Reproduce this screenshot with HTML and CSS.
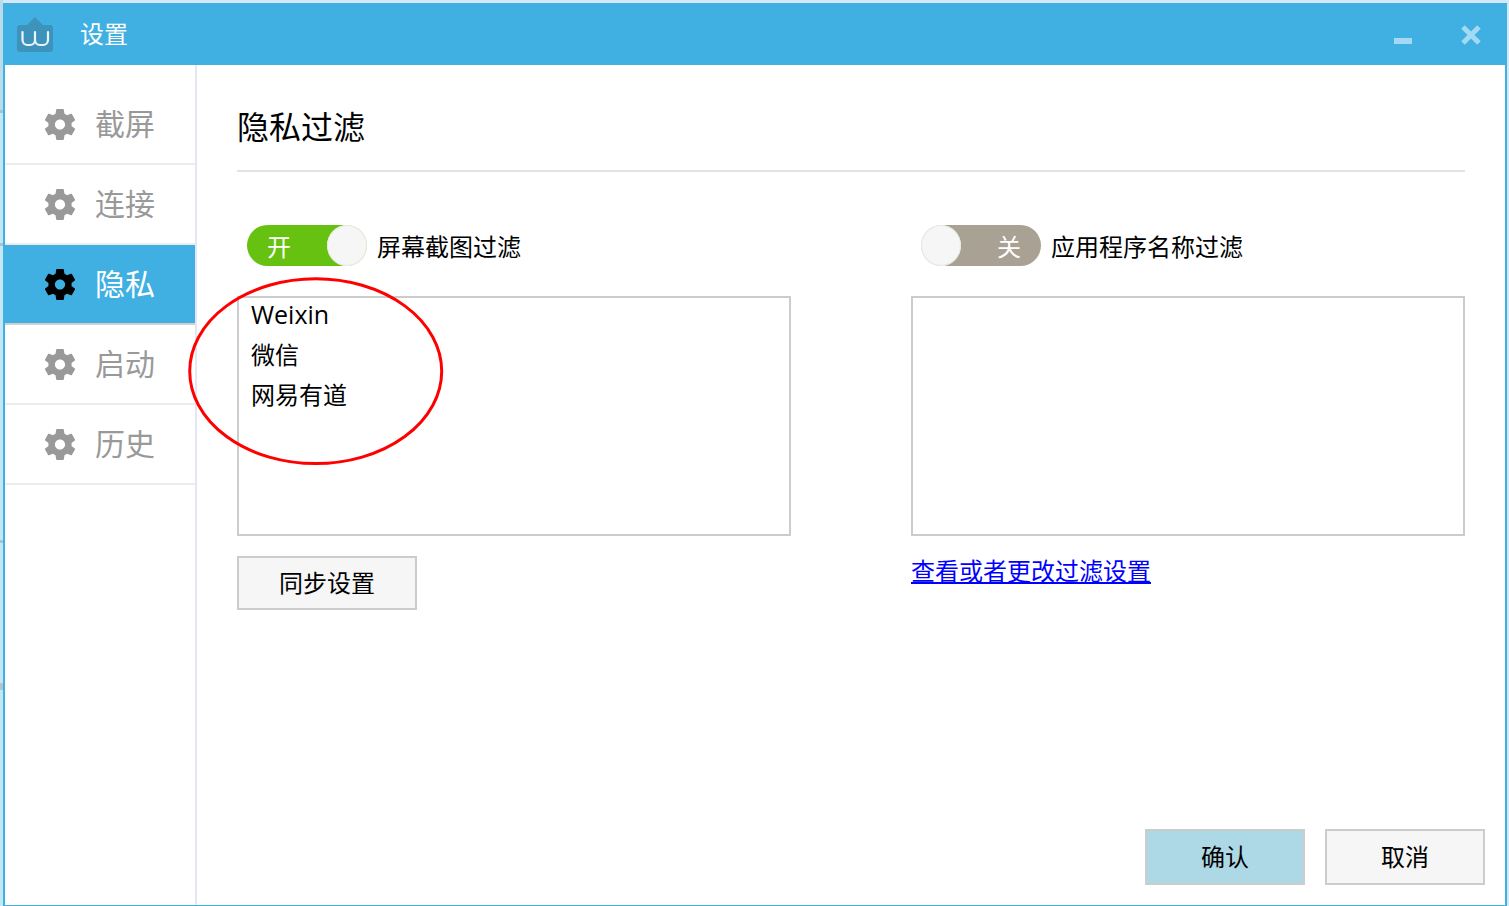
FILE: index.html
```html
<!DOCTYPE html>
<html lang="zh-CN">
<head>
<meta charset="utf-8">
<title>设置</title>
<link rel="stylesheet" href="styles.css">
</head>
<body>
<svg width="0" height="0" class="defs" aria-hidden="true"><defs>
<symbol id="gear" viewBox="2.4 2 19.2 20"><path fill-rule="evenodd" d="M19.43 12.98c.04-.32.07-.64.07-.98s-.03-.66-.07-.98l2.11-1.65c.19-.15.24-.42.12-.64l-2-3.46c-.12-.22-.39-.3-.61-.22l-2.49 1c-.52-.4-1.08-.73-1.69-.98l-.38-2.65C14.46 2.18 14.25 2 14 2h-4c-.25 0-.46.18-.49.42l-.38 2.65c-.61.25-1.17.59-1.69.98l-2.49-1c-.23-.09-.49 0-.61.22l-2 3.46c-.13.22-.07.49.12.64l2.11 1.65c-.04.32-.07.65-.07.98s.03.66.07.98l-2.11 1.65c-.19.15-.24.42-.12.64l2 3.46c.12.22.39.3.61.22l2.49-1c.52.4 1.08.73 1.69.98l.38 2.65c.03.24.24.42.49.42h4c.25 0 .46-.18.49-.42l.38-2.65c.61-.25 1.17-.59 1.69-.98l2.49 1c.23.09.49 0 .61-.22l2-3.46c.12-.22.07-.49-.12-.64l-2.11-1.65zM12 15.3c-1.82 0-3.3-1.48-3.3-3.3s1.48-3.3 3.3-3.3 3.3 1.48 3.3 3.3-1.48 3.3-3.3 3.3z"/></symbol>
</defs></svg>
<div class="window">
  <header class="titlebar">
    <svg class="logo" viewBox="0 0 36 35" width="36" height="35" aria-hidden="true">
      <path class="logo-bg" d="M18 0 L26 8 H33 a3 3 0 0 1 3 3 V32 a3 3 0 0 1-3 3 H3 a3 3 0 0 1-3-3 V11 a3 3 0 0 1 3-3 H10 Z"/>
      <path class="logo-w" d="M5.5 15 V23 a5 5 0 0 0 5 5 H13 a5 5 0 0 0 5-5 V15 M18 23 a5 5 0 0 0 5 5 H26 a5 5 0 0 0 5-5 V15"/>
    </svg>
    <span class="title">设置</span>
    <span class="minimize"></span>
    <svg class="close" viewBox="0 0 20 20" width="20" height="20" aria-hidden="true"><path d="M2 2 L18 18 M18 2 L2 18"/></svg>
  </header>
  <div class="body">
    <nav class="sidebar">
      <div class="nav-item"><svg class="gear"><use href="#gear"/></svg><span>截屏</span></div>
      <div class="nav-item"><svg class="gear"><use href="#gear"/></svg><span>连接</span></div>
      <div class="nav-item active"><svg class="gear"><use href="#gear"/></svg><span>隐私</span></div>
      <div class="nav-item"><svg class="gear"><use href="#gear"/></svg><span>启动</span></div>
      <div class="nav-item"><svg class="gear"><use href="#gear"/></svg><span>历史</span></div>
    </nav>
    <main class="main">
      <h1 class="heading">隐私过滤</h1>
      <div class="columns">
        <section class="col">
          <div class="switch-row">
            <div class="switch on"><span class="switch-text">开</span><span class="knob"></span></div>
            <span class="switch-label">屏幕截图过滤</span>
          </div>
          <div class="listbox">
            <div class="list-line latin">Weixin</div>
            <div class="list-line">微信</div>
            <div class="list-line">网易有道</div>
          </div>
          <button class="btn sync" type="button"><span class="btn-text">同步设置</span></button>
        </section>
        <section class="col">
          <div class="switch-row">
            <div class="switch off"><span class="knob"></span><span class="switch-text">关</span></div>
            <span class="switch-label">应用程序名称过滤</span>
          </div>
          <div class="listbox"></div>
          <a class="link" href="#">查看或者更改过滤设置</a>
        </section>
      </div>
      <footer class="footer">
        <button class="btn action primary" type="button"><span class="btn-text">确认</span></button>
        <button class="btn action" type="button"><span class="btn-text">取消</span></button>
      </footer>
    </main>
  </div>
  <svg class="annotation" viewBox="0 0 260 190" width="260" height="190" aria-hidden="true"><ellipse cx="128.7" cy="94.2" rx="126" ry="92.4"/></svg>
</div>
</body>
</html>
```
FILE: styles.css
```css
* { box-sizing: border-box; }
html, body { margin: 0; height: 906px; overflow: hidden; }
body {
  padding: 3px 2px 0 3px;
  background:
    linear-gradient(#b9dbea 0 110px, #a9c4d0 110px 113px, #c4e7f6 113px 243px, #a9c4d0 243px 246px, #c4e7f6 246px 540px, #a9c4d0 540px 543px, #c4e7f6 543px 683px, #b5c4ca 683px 690px, #c4e7f6 690px) left top / 3px 100% no-repeat,
    #d3eaf6;
  font-family: "Noto Sans CJK SC", "Noto Sans", sans-serif;
  color: #000;
}
.defs { position: absolute; }
.window {
  position: relative;
  height: 903px;
  display: flex;
  flex-direction: column;
  background: #fff;
  border: solid #3fb0e2;
  border-width: 0 2px 1px;
}
.titlebar {
  height: 62px;
  margin: 0 -2px;
  flex: none;
  display: flex;
  align-items: center;
  padding: 0 26px 0 14px;
  background: #40b0e2;
}
.logo { margin-top: 1px; flex: none; }
.logo-bg { fill: #3e93bd; }
.logo-w { fill: none; stroke: #eaf6fb; stroke-width: 2.2; stroke-linecap: round; }
.title { margin-left: 27px; padding-bottom: 2px; color: #fff; font-size: 24px; line-height: 32px; flex: 1; }
.minimize { width: 18px; height: 6px; margin: 13px 49px 0 0; background: #a3d9f2; }
.close { margin-top: 1px; }
.close path { fill: none; stroke: #a3d9f2; stroke-width: 5; }
.body { flex: 1; display: flex; min-height: 0; }
.sidebar {
  width: 192px;
  flex: none;
  padding-top: 20px;
  border-right: 2px solid #e3e6f5;
}
.nav-item {
  height: 80px;
  display: flex;
  align-items: center;
  padding-left: 40px;
  border-bottom: 2px solid #ececec;
  color: #999;
  font-size: 30px;
  line-height: 40px;
}
.nav-item span { margin-left: 20px; padding-bottom: 4px; }
.gear { width: 30px; height: 31px; fill: #999; flex: none; }
.nav-item.active { background: #40b0e2; color: #fff; border-bottom-color: #d0d0d0; }
.nav-item.active .gear { fill: #000; }
.main {
  flex: 1;
  min-width: 0;
  display: flex;
  flex-direction: column;
  padding: 39px 40px 0;
}
.heading {
  margin: 0;
  padding-bottom: 24px;
  border-bottom: 2px solid #e3e3e3;
  font-size: 32px;
  line-height: 42px;
  font-weight: 400;
}
.columns {
  margin-top: 53px;
  display: grid;
  grid-template-columns: 554px 554px;
  column-gap: 120px;
}
.col { display: flex; flex-direction: column; align-items: flex-start; }
.switch-row { display: flex; align-items: center; padding-left: 10px; height: 41px; }
.switch {
  width: 120px;
  height: 41px;
  border-radius: 21px;
  display: flex;
  align-items: center;
  justify-content: space-between;
  color: #fff;
  font-size: 24px;
}
.switch.on { background: #67c110; padding-left: 20px; }
.switch.off { background: #a9a193; padding-right: 20px; }
.knob {
  width: 40px;
  height: 41px;
  border-radius: 50%;
  background: #f6f6f6;
  box-shadow: inset 0 0 0 1px #e6ebe0;
}
.switch-text { line-height: 32px; }
.switch-label { margin-left: 10px; font-size: 24px; line-height: 32px; }
.listbox {
  width: 554px;
  height: 240px;
  margin-top: 30px;
  padding: 0 12px;
  border: 2px solid #ccc;
  font-size: 24px;
}
.list-line { height: 40.2px; line-height: 32px; }
.latin { font-family: "Open Sans", "Noto Sans", sans-serif; font-size: 25px; }
.btn {
  font-family: inherit;
  font-size: 24px;
  color: #000;
  background: #f6f6f6;
  border: 2px solid #ccc;
  padding: 0;
}
.btn-text { display: block; padding-bottom: 3px; line-height: 32px; }
.sync { width: 180px; height: 54px; margin-top: 20px; }
.link { margin-top: 18px; font-size: 24px; line-height: 32px; color: #00f; text-decoration: underline; }
.footer {
  margin: auto -20px 20px 0;
  display: flex;
  justify-content: flex-end;
  gap: 20px;
}
.action { width: 160px; height: 56px; }
.primary { background: #add8e6; }
.annotation { position: absolute; left: 182px; top: 274px; pointer-events: none; }
.annotation ellipse { fill: none; stroke: #f00; stroke-width: 3; }
```
